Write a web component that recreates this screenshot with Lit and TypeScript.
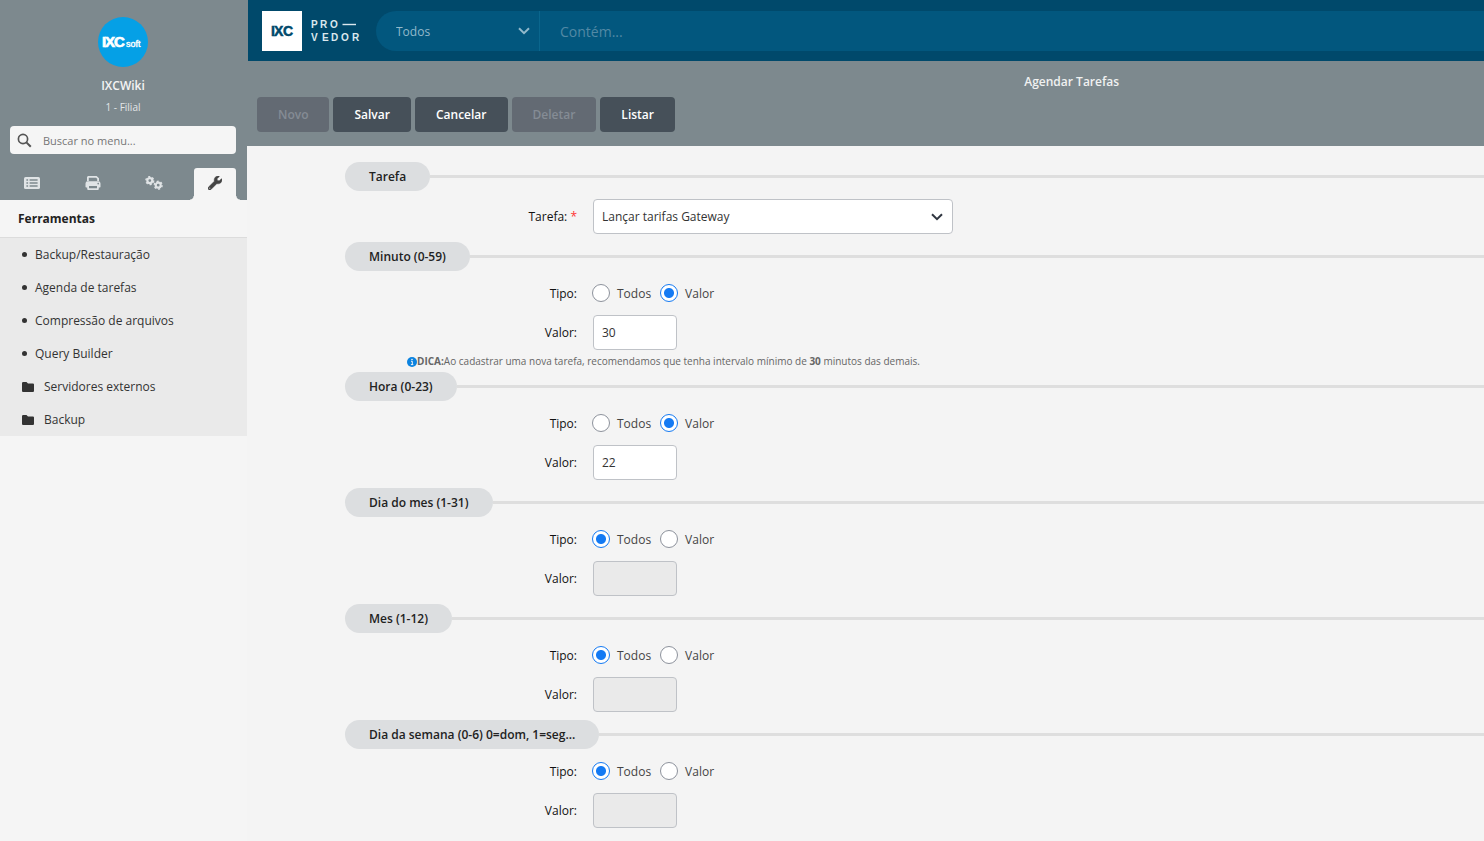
import { LitElement, html, css, svg, nothing } from "lit";
import { customElement, property } from "lit/decorators.js";

const icons = {
  search: svg`<svg class="search-icon" viewBox="0 0 16 16" aria-hidden="true"><circle cx="6.400" cy="6.400" r="4.900" fill="none" stroke="currentColor" stroke-width="1.800"/><path d="M10 10l4.700 4.700" stroke="currentColor" stroke-width="2.200"/></svg>`,
  list: svg`<svg viewBox="0 0 18 16" width="18" height="16" aria-hidden="true"><rect x="1" y="2" width="16" height="12" rx="1.600" fill="currentColor"/><path d="M6.600 5h8M6.600 8h8M6.600 11h8M3.400 5h1.700M3.400 8h1.700M3.400 11h1.700" stroke="#7d898e" stroke-width="1.300"/></svg>`,
  print: svg`<svg viewBox="0 0 16 16" width="16" height="16" aria-hidden="true"><path fill="currentColor" fill-rule="evenodd" d="M2 6V2.600C2 1.700 2.700 1 3.600 1h8L14 3.200V6H12.200V3.800L11 2.700H3.800V6zM2.700 6.300h10.600A2.200 2.200 0 0 1 15.500 8.500V11.700a.7.7 0 0 1-.7.7H13.800V14a1 1 0 0 1-1 1h-9.600a1 1 0 0 1-1-1V12.400H1.200a.7.7 0 0 1-.7-.7V8.500A2.200 2.200 0 0 1 2.700 6.300zM4 11v2.300h8V11zM13.200 7.800a.8.8 0 1 0 .01 0z"/></svg>`,
  gears: svg`<svg viewBox="0 0 18 14" width="18" height="14" aria-hidden="true"><g fill="none" stroke="currentColor"><circle cx="4.800" cy="4.600" r="2.500" stroke-width="2.200"/><circle cx="4.800" cy="4.600" r="3.900" stroke-width="1.400" stroke-dasharray="2.040 2.040"/><circle cx="13.200" cy="9.200" r="2.500" stroke-width="2.200"/><circle cx="13.200" cy="9.200" r="3.900" stroke-width="1.400" stroke-dasharray="2.040 2.040"/></g></svg>`,
  wrench: svg`<svg viewBox="0 0 512 512" width="14" height="14" aria-hidden="true"><path fill="currentColor" stroke="currentColor" stroke-width="16" d="M507.730 109.100c-2.240-9.030-13.540-12.090-20.120-5.510l-74.360 74.360-67.880-11.310-11.310-67.880 74.360-74.360c6.620-6.620 3.430-17.900-5.660-20.160-47.380-11.740-99.550.91-136.580 37.930-39.640 39.640-50.550 97.100-34.050 147.200L18.740 402.760c-24.990 24.990-24.990 65.510 0 90.500 24.990 24.990 65.510 24.990 90.500 0l213.210-213.210c50.120 16.710 107.470 5.680 147.370-34.220 37.070-37.070 49.700-89.320 37.910-136.730zM64 472c-13.250 0-24-10.750-24-24 0-13.260 10.750-24 24-24s24 10.740 24 24c0 13.250-10.750 24-24 24z"/></svg>`,
  folder: svg`<svg class="folder" viewBox="0 0 12 10" width="12" height="10" aria-hidden="true"><path fill="currentColor" d="M1.200 0H4.500L6 1.400H10.800A1.100 1.100 0 0 1 12 2.500V8.900A1.100 1.100 0 0 1 10.900 10H1.100A1.100 1.100 0 0 1 0 8.900V1.200A1.200 1.200 0 0 1 1.200 0z"/></svg>`,
  chevron: svg`<svg class="chevron" viewBox="0 0 12 8" aria-hidden="true"><path d="M1 1.200l5 5 5-5" fill="none" stroke="currentColor" stroke-width="2"/></svg>`,
  info: svg`<svg viewBox="0 0 10 10" width="10" height="10" aria-hidden="true"><circle cx="5" cy="5" r="5" fill="#0b83e0"/><path d="M4 4.300h1.300V7.500M3.900 7.600h2.400" fill="none" stroke="#f4f4f4" stroke-width="1"/><circle cx="5" cy="2.500" r=".8" fill="#f4f4f4"/></svg>`,
};

const reset = css`
  *, *::before, *::after { box-sizing: border-box; }
  button, input, select { font: inherit; margin: 0; }
  svg { display: block; flex: none; }
`;

@customElement("side-menu")
export class SideMenu extends LitElement {
  static styles = [reset, css`
    :host { display: block; color: #333; }
    .top { background: #7d898e; padding: 17px 11px 0 10px; }
    .profile { display: flex; flex-direction: column; align-items: center; color: #f4f4f4; }
    .avatar { width: 50px; height: 50px; }
    .name { font-weight: 600; line-height: 18px; margin-top: 10px; }
    .branch { font-size: 10px; line-height: 14px; margin-top: 5px; color: #e3e6e7; }
    .search { display: flex; align-items: center; height: 28px; margin-top: 12px; padding-left: 7px; gap: 11px; border-radius: 4px; background: #f5f5f5; color: #555; }
    .search-icon { width: 15px; height: 15px; }
    .search input { flex: 1; min-width: 0; padding: 0; border: 0; background: none; outline: 0; font-size: 11px; }
    .search input::placeholder { color: #757575; opacity: 1; }
    .tabs { display: grid; grid-template-columns: repeat(3, 1fr) 42px; margin-top: 14px; }
    .tab { position: relative; display: grid; place-items: center; height: 32px; padding: 0 18px 2px 0; border: 0; background: none; color: #e0e4e6; }
    .tab.active { padding: 0 0 2px; background: #f5f5f5; color: #444; border-radius: 3px 3px 0 0; }
    .tab.active::before, .tab.active::after { content: ""; position: absolute; bottom: 0; width: 4px; height: 4px; }
    .tab.active::before { right: 100%; background: radial-gradient(circle at 0 0, transparent 3px, #f5f5f5 4px); }
    .tab.active::after { left: 100%; background: radial-gradient(circle at 100% 0, transparent 3px, #f5f5f5 4px); }
    h2 { margin: 0; padding: 10px 18px 9px; font-size: 12px; line-height: 18px; font-weight: 700; color: #222; border-bottom: 1px solid #dcdcdc; }
    ul { list-style: none; margin: 0; padding: 0; background: #eaeaea; }
    a { display: flex; align-items: center; height: 33px; padding-left: 22px; gap: 8px; color: #333; text-decoration: none; }
    a.group { gap: 10px; }
    .dot { width: 5px; height: 5px; border-radius: 50%; background: #333; }
  `];

  render() {
    const tabs: [string, unknown][] = [
      ["Cadastros", icons.list], ["Relatórios", icons.print],
      ["Configurações", icons.gears], ["Ferramentas", icons.wrench],
    ];
    const pages = ["Backup/Restauração", "Agenda de tarefas", "Compressão de arquivos", "Query Builder"];
    const groups = ["Servidores externos", "Backup"];
    return html`
      <div class="top">
        <div class="profile">
          <svg class="avatar" viewBox="0 0 50 50" role="img" aria-label="IXCsoft">
            <circle cx="25" cy="25" r="25" fill="#05a0e6"/>
            <g fill="#fff" stroke="#fff" font-family="Liberation Sans, sans-serif" font-weight="700">
              <text y="30" font-size="15" stroke-width=".7"><tspan x="4">I</tspan><tspan x="7">X</tspan><tspan x="16">C</tspan></text>
              <text x="28" y="30" font-size="9" font-weight="400" stroke-width=".4">soft</text>
            </g>
          </svg>
          <div class="name">IXCWiki</div>
          <div class="branch">1 - Filial</div>
        </div>
        <label class="search">${icons.search}<input type="search" aria-label="Buscar no menu" placeholder="Buscar no menu..."></label>
        <div class="tabs">
          ${tabs.map(([label, icon], i) => html`<button class="tab ${i === 3 ? "active" : ""}" type="button" aria-label=${label}>${icon}</button>`)}
        </div>
      </div>
      <h2>Ferramentas</h2>
      <ul>
        ${pages.map((p) => html`<li><a href="#"><span class="dot"></span>${p}</a></li>`)}
        ${groups.map((g) => html`<li><a class="group" href="#">${icons.folder}${g}</a></li>`)}
      </ul>`;
  }
}

@customElement("schedule-section")
export class ScheduleSection extends LitElement {
  @property() heading = "";
  @property() key = "";
  @property() value = "";
  @property({ type: Boolean }) all = false;
  @property({ type: Boolean }) task = false;
  @property({ type: Boolean }) hint = false;

  static styles = [reset, css`
    :host { display: block; }
    .heading { display: flex; align-items: center; }
    .heading::after { content: ""; flex: 1; height: 3px; background: #dedede; }
    h2 { margin: 0; padding: 0 24px; border-radius: 15px; background: #dcdee0; color: #222; font-size: 12px; line-height: 29px; font-weight: 600; }
    .row { display: grid; grid-template-columns: 232px 1fr; column-gap: 16px; align-items: center; min-height: 35px; }
    .task { margin: 8px 0; }
    .type { min-height: 20px; margin: 12px 0; }
    .row + .row { margin-bottom: 8px; }
    .hinted .value { margin-bottom: 0; }
    .caption { text-align: right; color: #111; line-height: 18px; }
    .type .caption, .choices span { padding-top: 2px; }
    .required { color: #f33; }
    .select { display: grid; width: 360px; align-items: center; }
    .select > * { grid-area: 1 / 1; }
    .chevron { width: 12px; height: 8px; justify-self: end; margin-right: 10px; color: #303640; pointer-events: none; }
    select, .box { height: 35px; padding: 0 8px; border: 1px solid #bfc2c7; border-radius: 4px; background: #fff; color: #333; outline: 0; }
    select { appearance: none; width: 100%; }
    .box { width: 84px; }
    .box:disabled { background: #eaeaea; }
    .choices { display: flex; gap: 9px; color: #444; margin-left: -1px; }
    .choices label { display: flex; align-items: center; gap: 7px; line-height: 18px; }
    .radio { appearance: none; width: 18px; height: 18px; border: 1px solid #8d929c; border-radius: 50%; background: #fff; }
    .radio:checked { border-color: #147af3; background: radial-gradient(circle, #147af3 4.500px, #fff 5.500px); }
    .hint { display: flex; align-items: center; margin: 4px 0 3px 62px; font-size: 10px; line-height: 15px; color: #666; white-space: pre; }
  `];

  render() {
    return html`
      <div class="heading"><h2>${this.heading}</h2></div>
      ${this.task ? html`
        <div class="row task">
          <label class="caption" for="task">Tarefa: <span class="required">*</span></label>
          <div class="select">
            <select id="task"><option>Lançar tarifas Gateway</option></select>
            ${icons.chevron}
          </div>
        </div>` : html`
        <div class=${this.hint ? "hinted" : ""}>
          <div class="row type" role="radiogroup" aria-labelledby="type">
            <span class="caption" id="type">Tipo:</span>
            <div class="choices">
              <label><input class="radio" type="radio" name=${this.key} .checked=${this.all}><span>Todos</span></label>
              <label><input class="radio" type="radio" name=${this.key} .checked=${!this.all}><span>Valor</span></label>
            </div>
          </div>
          <div class="row value">
            <label class="caption" for="value">Valor:</label>
            <input class="box" id="value" type="text" .value=${this.value} ?disabled=${this.all}>
          </div>
          ${this.hint ? html`<div class="hint">${icons.info}<b>DICA:</b>Ao cadastrar uma nova tarefa, recomendamos que tenha intervalo mínimo de <b>30</b> minutos das demais.</div>` : nothing}
        </div>`}`;
  }
}

@customElement("app-root")
export class AppRoot extends LitElement {
  static styles = [reset, css`
    :host { display: grid; grid-template-columns: 247px minmax(0, 1fr); min-height: 100vh; background: #f4f4f4; font: 12px "Open Sans", "Noto Sans", sans-serif; color: #333; }
    side-menu { background: #f5f5f5; }
    .bar { display: flex; align-items: center; height: 61px; margin-left: 1px; padding-left: 14px; background: #00496b; }
    .brand { width: 98px; height: 40px; }
    .finder { flex: 1; display: flex; align-items: stretch; height: 40px; margin-left: 16px; border-radius: 20px 0 0 20px; background: #02577e; }
    .scope { display: grid; width: 164px; align-items: center; border-right: 1px solid #0a668d; color: #92b9cb; }
    .scope > * { grid-area: 1 / 1; }
    .scope select { appearance: none; width: 100%; height: 40px; padding: 2px 20px 0; border: 0; background: none; color: inherit; outline: 0; }
    .chevron { width: 12px; height: 8px; justify-self: end; margin-right: 9px; pointer-events: none; }
    .term { flex: 1; min-width: 0; padding: 2px 20px 0; border: 0; background: none; outline: 0; color: #fff; font-size: 14px; }
    .term::placeholder { color: #5289a5; opacity: 1; }
    .head { background: #7d898e; padding-bottom: 14px; }
    .title { display: grid; grid-template-columns: 1fr 2fr; padding: 12px 0 6px; }
    h1 { grid-column: 2; margin: 0; font-size: 12px; line-height: 18px; font-weight: 600; text-align: center; color: #f0f1f1; }
    .actions { display: flex; gap: 4px; padding-left: 10px; }
    .action { height: 35px; padding: 0 21px; border: 0; border-radius: 4px; background: #465059; color: #fff; font-weight: 600; }
    .action:disabled { background: #636a73; color: #858c95; }
    form { padding: 16px 0 5px 98px; }
  `];

  render() {
    const actions: [string, boolean][] = [["Novo", true], ["Salvar", false], ["Cancelar", false], ["Deletar", true], ["Listar", false]];
    return html`
      <side-menu></side-menu>
      <main>
        <header class="head">
          <div class="bar">
            <svg class="brand" viewBox="0 0 98 40" role="img" aria-label="IXC Provedor">
              <rect width="40" height="40" fill="#fff"/>
              <g font-family="Liberation Sans, sans-serif" font-weight="700">
                <text y="25" font-size="14" fill="#00496b" stroke="#00496b" stroke-width=".5"><tspan x="9">I</tspan><tspan x="12">X</tspan><tspan x="21">C</tspan></text>
                <text y="17" font-size="10" fill="#dce8ee"><tspan x="49">P</tspan><tspan x="58">R</tspan><tspan x="68">O</tspan></text>
                <text y="30" font-size="10" fill="#dce8ee"><tspan x="49">V</tspan><tspan x="60">E</tspan><tspan x="69">D</tspan><tspan x="79">O</tspan><tspan x="90">R</tspan></text>
              </g>
              <path d="M80.500 13.500h13.500" stroke="#dce8ee" stroke-width="1.400"/>
            </svg>
            <div class="finder">
              <div class="scope">
                <select aria-label="Onde buscar"><option>Todos</option></select>
                ${icons.chevron}
              </div>
              <input class="term" type="text" aria-label="Contém" placeholder="Contém...">
            </div>
          </div>
          <div class="title"><h1>Agendar Tarefas</h1></div>
          <div class="actions">
            ${actions.map(([label, off]) => html`<button class="action" type="button" ?disabled=${off}>${label}</button>`)}
          </div>
        </header>
        <form>
          <schedule-section heading="Tarefa" task></schedule-section>
          <schedule-section heading="Minuto (0-59)" key="minute" value="30" hint></schedule-section>
          <schedule-section heading="Hora (0-23)" key="hour" value="22"></schedule-section>
          <schedule-section heading="Dia do mes (1-31)" key="day" all></schedule-section>
          <schedule-section heading="Mes (1-12)" key="month" all></schedule-section>
          <schedule-section heading="Dia da semana (0-6) 0=dom, 1=seg..." key="weekday" all></schedule-section>
        </form>
      </main>`;
  }
}
